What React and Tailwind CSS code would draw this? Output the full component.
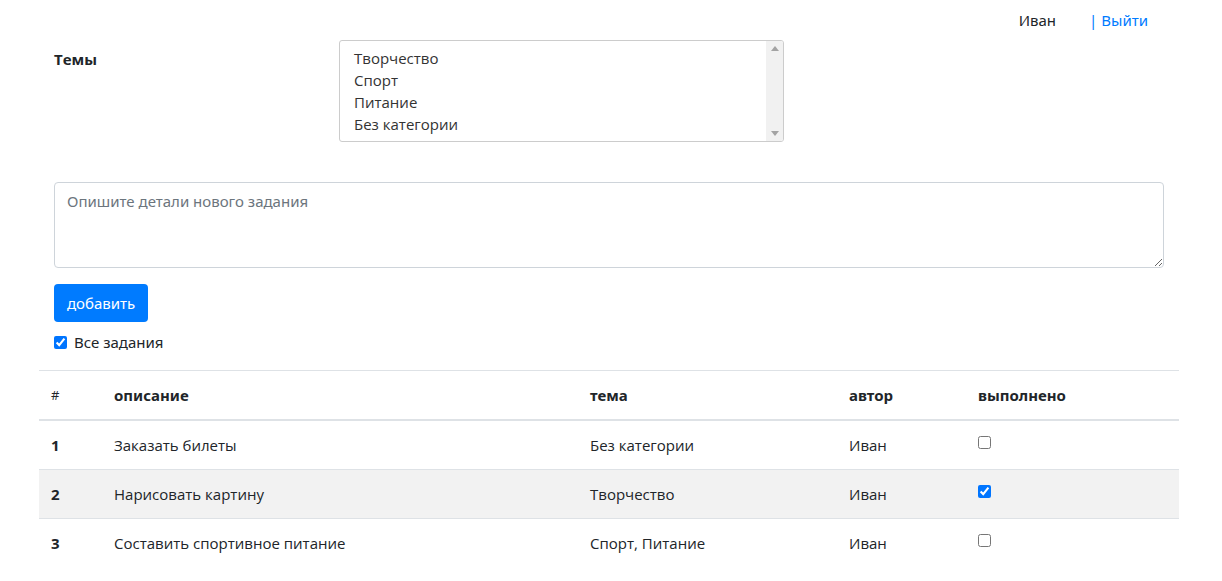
import { useState } from "react";

const themes = ["Творчество", "Спорт", "Питание", "Без категории"];

const tasks = [
    { id: 1, text: "Заказать билеты", theme: "Без категории", author: "Иван", done: false },
    { id: 2, text: "Нарисовать картину", theme: "Творчество", author: "Иван", done: true },
    { id: 3, text: "Составить спортивное питание", theme: "Спорт, Питание", author: "Иван", done: false },
];

function App() {
    const [allTasks, setAllTasks] = useState(true);
    const [rows, setRows] = useState(tasks);
    const [details, setDetails] = useState("");

    const toggle = (id) => {
        setRows(rows.map((r) => (r.id === id ? { ...r, done: !r.done } : r)));
    };

    return (
        <div className="min-h-screen bg-white text-[#212529] font-['Noto_Sans',sans-serif]">
            <div className="flex justify-end pr-[74px] pt-[9px] text-[15px] leading-[22px]">
                <span>Иван</span>
                <a href="#" className="ml-[33px] text-[#007bff]">| Выйти</a>
            </div>

            <div className="ml-[39px] w-[1140px]">
                <div className="flex px-[15px] pt-[9px]">
                    <div className="w-[285px] pt-[8px] font-['Open_Sans',sans-serif] text-[15px] font-bold leading-[22px]">
                        Темы
                    </div>
                    <div className="flex h-[102px] w-[445px] overflow-hidden rounded-[3px] border border-[#ccc] font-['Open_Sans',sans-serif] text-[15px] leading-[22px] text-[#333]">
                        <div className="flex-1 pl-[14px] pt-[6px]">
                            {themes.map((t) => (
                                <div key={t}>{t}</div>
                            ))}
                        </div>
                        <div className="flex w-[17px] flex-col items-center justify-between bg-[#f1f1f1] py-[5px]">
                            <div className="h-0 w-0 border-x-[4px] border-b-[5px] border-x-transparent border-b-[#a3a3a3]"></div>
                            <div className="h-0 w-0 border-x-[4px] border-t-[5px] border-x-transparent border-t-[#a3a3a3]"></div>
                        </div>
                    </div>
                </div>

                <div className="px-[15px] pt-[40px]">
                    <textarea
                        value={details}
                        onChange={(e) => setDetails(e.target.value)}
                        placeholder="Опишите детали нового задания"
                        className="block h-[86px] w-full rounded-[4px] border border-[#ced4da] px-[12px] py-[7px] text-[15px] leading-[22px] placeholder:text-[#6c757d] outline-none"
                    />
                    <button className="mt-[16px] h-[38px] rounded-[4px] bg-[#007bff] px-[13px] text-[15px] text-white">
                        добавить
                    </button>
                    <label className="mt-[9px] flex items-center text-[15px] leading-[22px]">
                        <input
                            type="checkbox"
                            checked={allTasks}
                            onChange={() => setAllTasks(!allTasks)}
                            className="m-0 h-[13px] w-[13px] accent-[#0075ff]"
                        />
                        <span className="ml-[7px]">Все задания</span>
                    </label>
                </div>

                <table className="mt-[17px] w-full border-collapse text-left text-[15px] leading-[22px]">
                    <thead>
                        <tr className="border-t border-[#dee2e6] border-b-2">
                            <th className="w-[63px] px-[12px] py-[13px] font-['Open_Sans',sans-serif] text-[13px] font-normal">#</th>
                            <th className="w-[476px] px-[12px] py-[13px] font-bold">описание</th>
                            <th className="w-[259px] px-[12px] py-[13px] font-bold">тема</th>
                            <th className="w-[129px] px-[12px] py-[13px] font-bold">автор</th>
                            <th className="px-[12px] py-[13px] font-bold">выполнено</th>
                        </tr>
                    </thead>
                    <tbody className="font-['Open_Sans',sans-serif]">
                        {rows.map((r) => (
                            <tr key={r.id} className={"border-t border-[#dee2e6] " + (r.id === 2 ? "bg-[#f2f2f2]" : "")}>
                                <td className="h-[49px] px-[12px] font-bold">{r.id}</td>
                                <td className="px-[12px]">{r.text}</td>
                                <td className="px-[12px]">{r.theme}</td>
                                <td className="px-[12px]">{r.author}</td>
                                <td className="px-[12px] align-top pt-[11px]">
                                    <input
                                        type="checkbox"
                                        checked={r.done}
                                        onChange={() => toggle(r.id)}
                                        className="m-0 h-[13px] w-[13px] accent-[#0075ff]"
                                    />
                                </td>
                            </tr>
                        ))}
                    </tbody>
                </table>
            </div>
        </div>
    );
}

export default App;
